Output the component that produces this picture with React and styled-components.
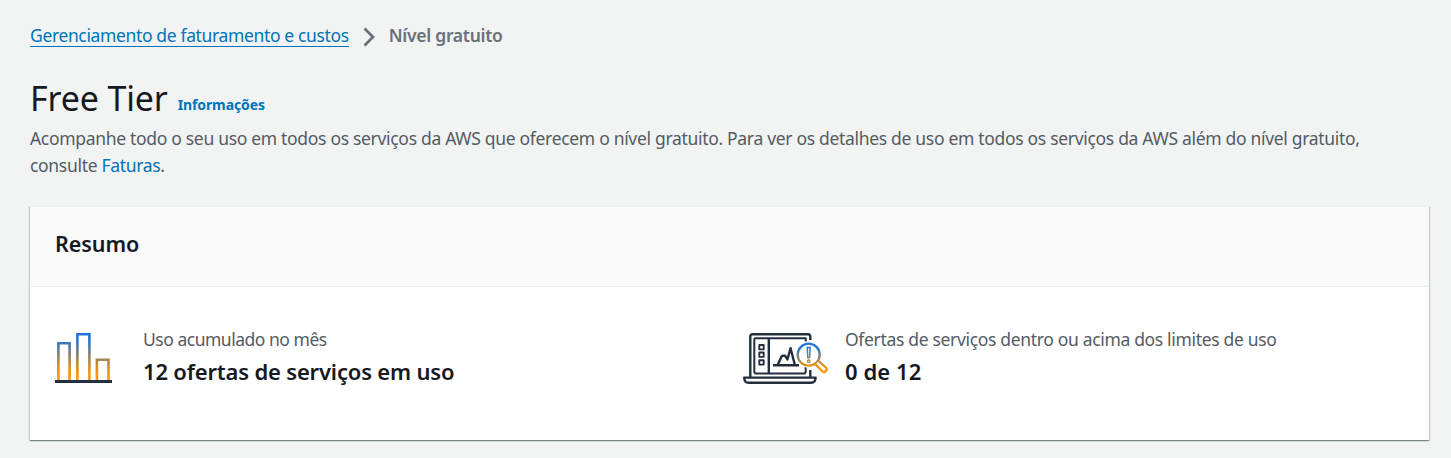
import React from 'react';
import styled, { createGlobalStyle } from 'styled-components';

const GlobalStyle = createGlobalStyle`
  * { box-sizing: border-box; }
  body {
    margin: 0;
    background: #f2f3f3;
    color: #16191f;
    font-family: "Noto Sans", "Open Sans", sans-serif;
    font-size: 17.5px;
  }
`;

const Page = styled.main`
  min-height: 458px;
  padding: 22px 22px 18px 30px;
`;

const Breadcrumbs = styled.nav`
  display: flex;
  align-items: flex-start;
  height: 27px;
  white-space: nowrap;
`;

const Crumb = styled.a`
  height: 25px;
  line-height: 27px;
  color: #0073bb;
  border-bottom: 1px solid #0073bb;
  letter-spacing: ${(p) => p.$track};
`;

const Chevron = styled.svg`
  width: 12px;
  height: 20px;
  margin: 5px 14px 0 14px;
`;

const Current = styled.span`
  color: #687078;
  font-weight: 600;
  line-height: 27px;
  letter-spacing: ${(p) => p.$track};
`;

const TitleRow = styled.header`
  display: flex;
  align-items: flex-start;
  height: 54px;
  margin-top: 22px;
`;

const Title = styled.h1`
  margin: 0;
  font-size: 34px;
  font-weight: 400;
  line-height: 54px;
  letter-spacing: ${(p) => p.$track};
`;

const InfoLink = styled.a`
  margin: 24px 0 0 10px;
  color: #0073bb;
  font-size: 14px;
  font-weight: 700;
  line-height: 20px;
  letter-spacing: ${(p) => p.$track};
`;

const Description = styled.p`
  margin: 0;
  color: #545b64;
  line-height: 27px;
  white-space: nowrap;
`;

const Line = styled.span`
  display: block;
  letter-spacing: ${(p) => p.$track};
`;

const Link = styled.a`
  color: #0073bb;
`;

const Panel = styled.section`
  height: 234px;
  margin-top: 27px;
  background: #fff;
  border-top: 1px solid #eaeded;
  box-shadow: 0 1px 1px 0 rgba(0, 28, 36, 0.3), 1px 1px 1px 0 rgba(0, 28, 36, 0.15),
    -1px 1px 1px 0 rgba(0, 28, 36, 0.15);
`;

const PanelHeader = styled.div`
  display: flex;
  align-items: center;
  height: 80px;
  padding: 0 25px 6px;
  background: #fafafa;
  border-bottom: 1px solid #eaeded;
`;

const PanelTitle = styled.h2`
  margin: 0;
  font-size: 21.5px;
  font-weight: 650;
  letter-spacing: ${(p) => p.$track};
`;

const Metrics = styled.div`
  display: grid;
  grid-template-columns: 688px 1fr;
  padding: 39px 25px 0;
`;

const Metric = styled.div`
  display: flex;
  align-items: flex-start;
  gap: ${(p) => p.$gap};
`;

const Art = styled.svg`
  display: block;
  flex: none;
  width: ${(p) => p.$w}px;
  height: 60px;
  overflow: visible;
`;

const MetricLabel = styled.div`
  color: #545b64;
  line-height: 27px;
  white-space: nowrap;
  letter-spacing: ${(p) => p.$track};
`;

const MetricValue = styled.div`
  font-size: 22px;
  font-weight: 650;
  line-height: 36px;
  white-space: nowrap;
  letter-spacing: ${(p) => p.$track};
`;

function BarsArt() {
  return (
    <Art $w={57} viewBox="0 0 57 60" fill="none">
      <defs>
        <linearGradient id="bars" gradientUnits="userSpaceOnUse" x1="0" y1="7" x2="0" y2="55">
          <stop offset="0" stopColor="#1f74dc" />
          <stop offset="0.15" stopColor="#2875cf" />
          <stop offset="0.82" stopColor="#f79300" />
          <stop offset="1" stopColor="#ff9900" />
        </linearGradient>
      </defs>
      <path d="M3.4 54.5V17.2h11.2v37.3M22.4 54.5V8.2h12v46.3M41.9 54.5V33.7h11.6v20.8" stroke="url(#bars)" strokeWidth="2.6" />
      <path d="M0 55.5h57" stroke="#232f3e" strokeWidth="2.8" />
    </Art>
  );
}

function LaptopArt() {
  return (
    <Art $w={85} viewBox="0 0 85 60" fill="none">
      <defs>
        <linearGradient id="lens" gradientUnits="userSpaceOnUse" x1="0" y1="15" x2="0" y2="46">
          <stop offset="0" stopColor="#1f74dc" />
          <stop offset="0.25" stopColor="#2b76cc" />
          <stop offset="0.85" stopColor="#f79300" />
          <stop offset="1" stopColor="#ff9900" />
        </linearGradient>
      </defs>
      <g stroke="#232f3e" strokeWidth="2.4" strokeLinejoin="round">
        <path d="M7.3 51V10.5Q7.3 8.2 9.6 8.2H65Q67.3 8.2 67.3 10.5V14M67.3 44V51" />
        <path d="M62.7 15.5V12.3H12.4Q11.3 12.3 11.3 13.4V45.2Q11.3 47.6 13.4 47.6H60.6Q62.7 47.6 62.7 45.2V40.5" strokeWidth="2" />
        <path d="M25.8 12.3V47.6" />
        <path d="M16.3 19h4.4v4.4h-4.4zM16.3 26.5h4.4v4.4h-4.4zM16.3 34.2h4.4v4.4h-4.4z" strokeWidth="1.9" />
        <path d="M30 39.3h26M34.6 39l3.8-8.2q.5-1 1.5-1h2.2l2.3 3.6 3.2-11.2 4.2 16.5" />
        <path d="M1.2 51.6h71.4q0 5.2-4.4 5.2H5.6q-4.4 0-4.4-5.2z" />
      </g>
      <circle cx="65.7" cy="28.7" r="13" fill="#fff" />
      <g stroke="url(#lens)" strokeWidth="2.3">
        <circle cx="65.7" cy="28.7" r="11" />
        <path d="M64.3 21.5h2.8l-.5 10.2h-1.8z" strokeWidth="1.5" />
        <circle cx="65.7" cy="35.3" r="1.3" strokeWidth="1.3" />
        <path d="M72.6 38.4l6.8 7q1.8 1.3 3.5-.3 1.6-1.8.1-3.4L75.6 35" fill="#fff" />
      </g>
    </Art>
  );
}

export default function App() {
  return (
    <>
      <GlobalStyle />
      <Page>
        <Breadcrumbs>
          <Crumb $track="-0.36px">Gerenciamento de faturamento e custos</Crumb>
          <Chevron viewBox="0 0 12 20" fill="none" stroke="#687078" strokeWidth="2.7">
            <path d="M1.5 1.5 10 10 1.5 18.5" />
          </Chevron>
          <Current $track="-0.28px">Nível gratuito</Current>
        </Breadcrumbs>
        <TitleRow>
          <Title $track="-0.15px">Free Tier</Title>
          <InfoLink $track="-0.12px">Informações</InfoLink>
        </TitleRow>
        <Description>
          <Line $track="-0.313px">
            Acompanhe todo o seu uso em todos os serviços da AWS que oferecem o nível gratuito. Para ver os detalhes de uso em todos os serviços da AWS além do nível gratuito,
          </Line>
          <Line $track="-0.313px">
            consulte <Link>Faturas</Link>.
          </Line>
        </Description>
        <Panel>
          <PanelHeader>
            <PanelTitle $track="-0.05px">Resumo</PanelTitle>
          </PanelHeader>
          <Metrics>
            <Metric $gap="31px">
              <BarsArt />
              <div>
                <MetricLabel $track="-0.48px">Uso acumulado no mês</MetricLabel>
                <MetricValue $track="-0.18px">12 ofertas de serviços em uso</MetricValue>
              </div>
            </Metric>
            <Metric $gap="17px">
              <LaptopArt />
              <div>
                <MetricLabel $track="-0.33px">Ofertas de serviços dentro ou acima dos limites de uso</MetricLabel>
                <MetricValue $track="0.08px">0 de 12</MetricValue>
              </div>
            </Metric>
          </Metrics>
        </Panel>
      </Page>
    </>
  );
}
